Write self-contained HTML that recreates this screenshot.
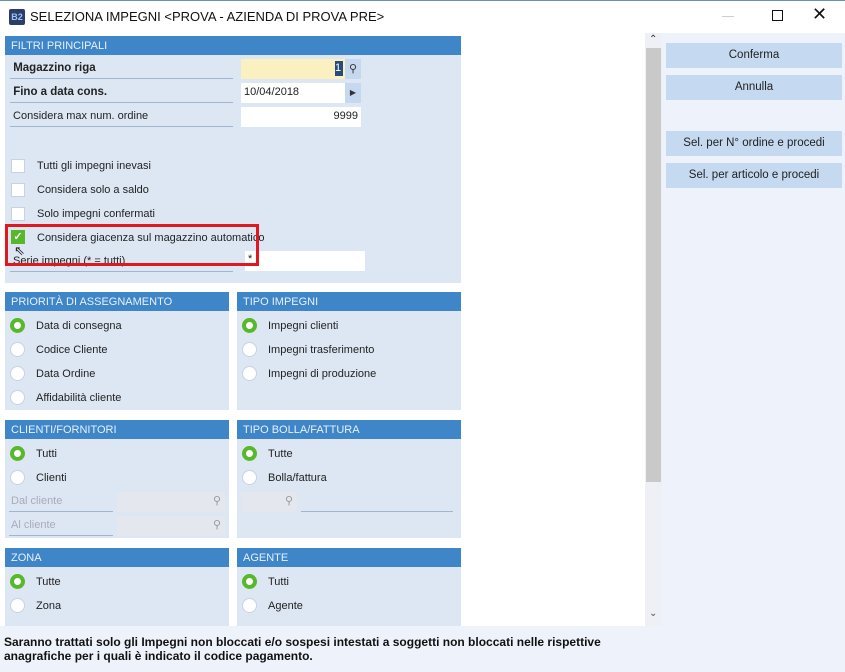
<!DOCTYPE html>
<html><head><meta charset="utf-8"><style>
*{box-sizing:border-box;margin:0;padding:0}
body{width:845px;height:672px;overflow:hidden;background:#eef2fa;font-family:"Liberation Sans",sans-serif;font-size:11px;color:#222;position:relative}
.a{position:absolute}
.title{left:0;top:0;width:845px;height:33px;background:#fff;border-top:1px solid #6a8fb0}
.hdr{background:#3e86c7;color:#e8f0fa;font-size:11px;padding:3px 6px;height:19px;line-height:14px}
.pan{background:#dde7f3}
.lbl{font-size:11px}
.ul{border-bottom:1px solid #9fb6d3}
.inp{background:#fff}
.cb{width:14px;height:14px;background:#fff;border:1px solid #c9d2de}
.rd{width:15px;height:15px;border-radius:50%;background:#fff;border:1px solid #c9d2de}
.rd.on{border:4px solid #57b82a;background:#fff}
.btn{background:#c5d9f1;text-align:center;font-size:11.5px;color:#222;line-height:25px;height:25px}
</style></head><body>
<div class="a title">
 <div class="a" style="left:9px;top:8px;width:16px;height:16px;background:#2c3e66;border-radius:2px;color:#9cc3ff;font-size:9px;font-weight:bold;line-height:16px;text-align:center">B2</div>
 <div class="a" style="left:30px;top:8px;font-size:13px;color:#111">SELEZIONA IMPEGNI &lt;PROVA - AZIENDA DI PROVA PRE&gt;</div>
 <div class="a" style="left:722px;top:15px;width:12px;height:1px;background:#ccc"></div>
 <div class="a" style="left:772px;top:9px;width:11px;height:11px;border:1px solid #111"></div>
 <div class="a" style="left:812px;top:3px;font-size:18px;color:#111">✕</div>
</div>
<div class="a" style="left:0;top:33px;width:645px;height:593px;background:#fff"></div>
<div class="a" style="left:645px;top:33px;width:17px;height:593px;background:#eef0f5"></div>
<div class="a" style="left:646px;top:48px;width:15px;height:434px;background:#c9c9c9"></div>
<div class="a" style="left:649px;top:34px;font-size:10px;color:#333">⌃</div>
<div class="a" style="left:649px;top:608px;font-size:10px;color:#555">⌄</div>

<div class="a pan" style="left:5px;top:36px;width:456px;height:247px"></div>
<div class="a hdr" style="left:5px;top:36px;width:456px">FILTRI PRINCIPALI</div>
<div class="a lbl ul" style="left:10px;top:62px;width:223px;height:17px;font-weight:bold;font-size:11.5px">&nbsp;Magazzino riga</div>
<div class="a" style="left:241px;top:59px;width:104px;height:20px;background:#fbf1c0"></div>
<div class="a" style="left:335px;top:61px;width:8px;height:15px;background:#2a4b7a;color:#fff;font-size:11px;line-height:15px">1</div>
<div class="a" style="left:345px;top:59px;width:16px;height:20px;background:#c6d8ef;font-size:11px;text-align:center;line-height:20px;color:#333">⚲</div>
<div class="a lbl ul" style="left:10px;top:86px;width:223px;height:17px;font-weight:bold;font-size:11.5px">&nbsp;Fino a data cons.</div>
<div class="a inp" style="left:241px;top:83px;width:104px;height:20px;padding:3px 3px">10/04/2018</div>
<div class="a" style="left:345px;top:83px;width:16px;height:20px;background:#c6d8ef;font-size:8px;text-align:center;line-height:20px;color:#333">▶</div>
<div class="a lbl ul" style="left:10px;top:110px;width:223px;height:17px">&nbsp;Considera max num. ordine</div>
<div class="a inp" style="left:241px;top:107px;width:120px;height:20px;padding:3px 3px;text-align:right">9999</div>

<div class="a cb" style="left:11px;top:159px"></div><div class="a" style="left:37px;top:160px">Tutti gli impegni inevasi</div>
<div class="a cb" style="left:11px;top:183px"></div><div class="a" style="left:37px;top:184px">Considera solo a saldo</div>
<div class="a cb" style="left:11px;top:207px"></div><div class="a" style="left:37px;top:208px">Solo impegni confermati</div>
<div class="a" style="left:11px;top:230px;width:14px;height:14px;background:#57b82a;color:#fff;font-size:11px;text-align:center;line-height:14px;font-weight:bold">✓</div>
<div class="a" style="left:37px;top:232px">Considera giacenza sul magazzino automatico</div>
<div class="a lbl ul" style="left:10px;top:255px;width:223px;height:17px">&nbsp;Serie impegni (* = tutti)</div>
<div class="a inp" style="left:245px;top:251px;width:120px;height:20px;padding:2px 3px">*</div>
<div class="a" style="left:5px;top:224px;width:254px;height:42px;border:3px solid #e0191e"></div>
<div class="a" style="left:14px;top:243px;font-size:13px;color:#222">⇖</div>

<div class="a pan" style="left:5px;top:292px;width:224px;height:118px"></div>
<div class="a hdr" style="left:5px;top:292px;width:224px">PRIORITÀ DI ASSEGNAMENTO</div>
<div class="a rd on" style="left:10px;top:318px"></div><div class="a" style="left:36px;top:320px">Data di consegna</div>
<div class="a rd" style="left:10px;top:342px"></div><div class="a" style="left:36px;top:344px">Codice Cliente</div>
<div class="a rd" style="left:10px;top:366px"></div><div class="a" style="left:36px;top:368px">Data Ordine</div>
<div class="a rd" style="left:10px;top:390px"></div><div class="a" style="left:36px;top:392px">Affidabilità cliente</div>

<div class="a pan" style="left:237px;top:292px;width:224px;height:118px"></div>
<div class="a hdr" style="left:237px;top:292px;width:224px">TIPO IMPEGNI</div>
<div class="a rd on" style="left:242px;top:318px"></div><div class="a" style="left:268px;top:320px">Impegni clienti</div>
<div class="a rd" style="left:242px;top:342px"></div><div class="a" style="left:268px;top:344px">Impegni trasferimento</div>
<div class="a rd" style="left:242px;top:366px"></div><div class="a" style="left:268px;top:368px">Impegni di produzione</div>

<div class="a pan" style="left:5px;top:420px;width:224px;height:118px"></div>
<div class="a hdr" style="left:5px;top:420px;width:224px">CLIENTI/FORNITORI</div>
<div class="a rd on" style="left:10px;top:446px"></div><div class="a" style="left:36px;top:448px">Tutti</div>
<div class="a rd" style="left:10px;top:470px"></div><div class="a" style="left:36px;top:472px">Clienti</div>
<div class="a ul" style="left:9px;top:495px;width:104px;height:17px;color:#aab;padding-left:2px">Dal cliente</div>
<div class="a" style="left:117px;top:492px;width:108px;height:20px;background:#e4e8ee;text-align:right;padding-right:4px;color:#999;line-height:18px">⚲</div>
<div class="a ul" style="left:9px;top:519px;width:104px;height:17px;color:#aab;padding-left:2px">Al cliente</div>
<div class="a" style="left:117px;top:516px;width:108px;height:20px;background:#e4e8ee;text-align:right;padding-right:4px;color:#999;line-height:18px">⚲</div>

<div class="a pan" style="left:237px;top:420px;width:224px;height:118px"></div>
<div class="a hdr" style="left:237px;top:420px;width:224px">TIPO BOLLA/FATTURA</div>
<div class="a rd on" style="left:242px;top:446px"></div><div class="a" style="left:268px;top:448px">Tutte</div>
<div class="a rd" style="left:242px;top:470px"></div><div class="a" style="left:268px;top:472px">Bolla/fattura</div>
<div class="a" style="left:241px;top:492px;width:56px;height:20px;background:#e4e8ee;text-align:right;padding-right:4px;color:#999;line-height:18px">⚲</div>
<div class="a ul" style="left:301px;top:495px;width:152px;height:17px"></div>

<div class="a pan" style="left:5px;top:548px;width:224px;height:78px"></div>
<div class="a hdr" style="left:5px;top:548px;width:224px">ZONA</div>
<div class="a rd on" style="left:10px;top:574px"></div><div class="a" style="left:36px;top:576px">Tutte</div>
<div class="a rd" style="left:10px;top:598px"></div><div class="a" style="left:36px;top:600px">Zona</div>
<div class="a pan" style="left:237px;top:548px;width:224px;height:78px"></div>
<div class="a hdr" style="left:237px;top:548px;width:224px">AGENTE</div>
<div class="a rd on" style="left:242px;top:574px"></div><div class="a" style="left:268px;top:576px">Tutti</div>
<div class="a rd" style="left:242px;top:598px"></div><div class="a" style="left:268px;top:600px">Agente</div>

<div class="a btn" style="left:666px;top:43px;width:176px">Conferma</div>
<div class="a btn" style="left:666px;top:75px;width:176px">Annulla</div>
<div class="a btn" style="left:666px;top:131px;width:176px">Sel. per N° ordine e procedi</div>
<div class="a btn" style="left:666px;top:163px;width:176px">Sel. per articolo e procedi</div>

<div class="a" style="left:4px;top:635px;font-weight:bold;font-size:12px;line-height:14px;color:#111">Saranno trattati solo gli Impegni non bloccati e/o sospesi intestati a soggetti non bloccati nelle rispettive<br>anagrafiche per i quali è indicato il codice pagamento.</div>
</body></html>
